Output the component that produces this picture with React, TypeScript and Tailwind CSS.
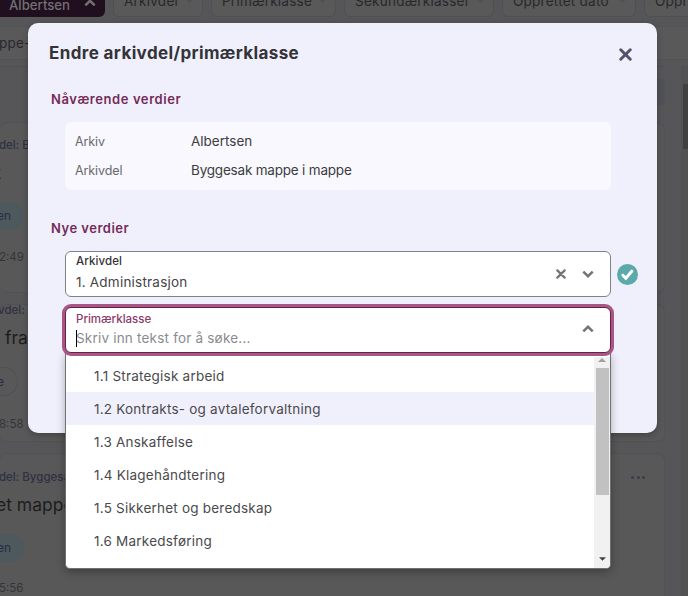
import React from "react";

const options = [
  "1.1 Strategisk arbeid",
  "1.2 Kontrakts- og avtaleforvaltning",
  "1.3 Anskaffelse",
  "1.4 Klagehåndtering",
  "1.5 Sikkerhet og beredskap",
  "1.6 Markedsføring",
];

function Chevron({ up = false, className = "" }: { up?: boolean; className?: string }) {
  return (
    <svg viewBox="0 0 12 8" fill="none" stroke="currentColor" className={className}>
      <path d={up ? "M1.3 6.3 6 1.8l4.700 4.500" : "M1.300 1.700 6 6.200l4.700-4.500"} strokeWidth="2.500" />
    </svg>
  );
}

function Cross({ className = "" }: { className?: string }) {
  return (
    <svg viewBox="0 0 12 12" fill="none" stroke="currentColor" strokeWidth="2.700" strokeLinecap="round" className={className}>
      <path d="M1.600 1.600l8.800 8.800M10.400 1.600l-8.800 8.800" />
    </svg>
  );
}

function FilterPill({ label, className }: { label: string; className: string }) {
  return (
    <div className={`flex h-[34px] shrink-0 items-center justify-between rounded-md border border-[#505053] bg-[#595959] pr-2 pl-[10px] text-[13.5px] tracking-[0.25px] text-[#28282b] ${className}`}>
      <span className="mt-[2px] whitespace-nowrap">{label}</span>
      <Chevron className="h-[6px] w-[9px] text-[#515153]" />
    </div>
  );
}

function Background() {
  return (
    <div className="flex h-full flex-col overflow-hidden bg-[#565658]">
      <div className="-mt-[17px] flex h-[43px] shrink-0 gap-2 overflow-hidden">
        <div className="flex h-[34px] w-[105px] shrink-0 items-center justify-between rounded-br-md bg-[#200f1e] pr-[9px] pl-[9px] text-[13.2px] font-medium text-[#737073]">
          <span className="mt-[12px]">Albertsen</span>
          <Chevron up className="mt-[5px] h-[8px] w-[12px] text-[#737073]" />
        </div>
        <FilterPill label="Arkivdel" className="w-[90px]" />
        <FilterPill label="Primærklasse" className="w-[125px]" />
        <FilterPill label="Sekundærklasser" className="w-[150px]" />
        <FilterPill label="Opprettet dato" className="w-[134px]" />
        <FilterPill label="Opprettet av" className="w-[134px]" />
      </div>
      <div className="flex h-[34px] shrink-0 items-center border-y border-[#535356] bg-[#595959] text-[13.5px] tracking-[0.2px] text-[#28282b]">
        <span className="-ml-px">ppe-</span>
      </div>
      <div className="flex min-h-0 flex-1 pt-[6px]">
        <div className="flex w-[665px] flex-col border-t border-[#505054]">
          <div className="flex h-[55px] shrink-0 items-start justify-end pt-[12px]">
            <div className="h-[26px] w-[30px] rounded-r bg-[#515158]" />
          </div>
          <div className="flex h-[171px] shrink-0 flex-col rounded-lg border border-l-0 border-[#525255] bg-[#585858] pt-[12px]">
            <div className="-ml-px h-[20px] text-[11.5px] leading-[20px] font-medium text-[#303043]">del: Byggesak</div>
            <div className="mt-[6px] -ml-[5px] h-[24px] text-[18px] leading-[24px] text-[#1d1d1f]">t</div>
            <div className="mt-[17px] h-[28px] w-[24px] rounded-r-full bg-[#4d595d] text-[12px] leading-[28px] text-[#292c45]"><span className="-ml-[3px]">en</span></div>
            <div className="mt-[17px] -ml-px h-[20px] text-[11.5px] leading-[20px] text-[#343438]">2:49</div>
          </div>
          <div className="mt-[11px] flex h-[138px] shrink-0 flex-col rounded-lg border border-l-0 border-[#525255] bg-[#585858]">
            <div className="mt-[-5px] -ml-[2px] h-[20px] text-[11.5px] leading-[20px] font-medium text-[#303043]">vdel: Byggesak</div>
            <div className="mt-[6px] h-[24px] pl-[5px] text-[17.5px] leading-[24px] text-[#1d1d1f]">fra</div>
            <div className="mt-[17px] h-[29px] w-[18px] rounded-r-full border border-l-0 border-[#505056] text-[12px] leading-[27px] text-[#292c45]"><span className="-ml-[3px]">e</span></div>
            <div className="mt-[18px] -ml-px h-[20px] text-[11.5px] leading-[20px] text-[#343438]">8:58</div>
          </div>
          <div className="mt-[11px] flex h-[180px] shrink-0 flex-col rounded-lg border border-l-0 border-[#525255] bg-[#585858] pt-[13px]">
            <div className="flex h-[20px] items-center justify-between pr-[19px] text-[11.5px] leading-[20px] font-medium text-[#303043]">
              <span className="-ml-px">del: Byggesak</span>
              <span className="flex gap-[2.5px]">
                <i className="size-[3px] rounded-full bg-[#3c3c4c]" />
                <i className="size-[3px] rounded-full bg-[#3c3c4c]" />
                <i className="size-[3px] rounded-full bg-[#3c3c4c]" />
              </span>
            </div>
            <div className="mt-[6px] -ml-[4px] h-[24px] text-[17.5px] leading-[24px] text-[#1d1d1f]">et mappe</div>
            <div className="mt-[17px] h-[28px] w-[24px] rounded-r-full bg-[#4d595d] text-[12px] leading-[28px] text-[#292c45]"><span className="-ml-[3px]">en</span></div>
            <div className="mt-[16px] -ml-px h-[20px] text-[11.5px] leading-[20px] text-[#343438]">5:56</div>
          </div>
        </div>
        <div className="ml-[16px] w-[7px] bg-[#525252] pt-[18px] pl-[2px]">
          <div className="h-[65px] w-full bg-[#404040]" />
        </div>
      </div>
    </div>
  );
}

function Dropdown() {
  return (
    <div className="absolute top-full left-0 flex h-[216px] w-[546px] overflow-hidden rounded-b-[5px] border border-t-0 border-[#707070] bg-white pt-[4px] shadow-[0_3px_8px_rgba(0,0,0,0.3)]">
      <div className="flex-1 pt-[2px]">
        {options.map((option, i) => (
          <div
            key={option}
            className={`h-[33px] pl-[28px] text-[13.5px] leading-[34px] tracking-[0.22px] text-[#4a4a4d] ${i === 1 ? "bg-[#f0f0fc]" : ""}`}
          >
            {option}
          </div>
        ))}
      </div>
      <div className="flex w-[16px] flex-col items-center justify-between bg-[#f1f1f1]">
        <div className="flex flex-col items-center">
          <svg viewBox="0 0 8 4" className="mt-[1px] mb-[6px] h-[4px] w-[8px]">
            <path d="M0 4 4 0l4 4z" fill="#a0a0a0" />
          </svg>
          <div className="h-[127px] w-[13px] bg-[#c1c1c1]" />
        </div>
        <svg viewBox="0 0 8 4" className="mb-[7px] h-[4px] w-[7px]">
          <path d="M0 0h8L4 4z" fill="#424242" />
        </svg>
      </div>
    </div>
  );
}

export default function App() {
  return (
    <div className="relative h-[596px] w-[688px] overflow-hidden font-['Inter',sans-serif]">
      <Background />
      <div className="absolute top-[23px] left-[28px] flex h-[410px] w-[629px] flex-col rounded-[10px] bg-[#f0f0fc] shadow-[0_2px_6px_rgba(0,0,0,0.25)]">
        <header className="flex h-[60px] items-center justify-between pr-[25px] pl-[21px]">
          <h1 className="mt-[2px] text-[17px] font-bold tracking-[0.38px] text-[#333338]">Endre arkivdel/primærklasse</h1>
          <Cross className="mt-[2px] size-[13px] text-[#52526d]" />
        </header>
        <h2 className="mt-[6px] ml-[23px] h-[20px] text-[13px] leading-[20px] font-semibold tracking-[0.58px] text-[#742b58]">Nåværende verdier</h2>
        <dl className="mt-[13px] ml-[37px] grid h-[68px] w-[546px] grid-cols-[116px_1fr] content-center rounded-md bg-[#f8f8fe] pl-[10px] leading-[29px]">
          <dt className="text-[12.5px] tracking-[-0.1px] text-[#69696d]">Arkiv</dt>
          <dd className="text-[13.5px] text-[#3c3c40]">Albertsen</dd>
          <dt className="text-[12.5px] tracking-[-0.1px] text-[#69696d]">Arkivdel</dt>
          <dd className="text-[13.5px] tracking-[-0.2px] text-[#3c3c40]">Byggesak mappe i mappe</dd>
        </dl>
        <h2 className="mt-[28px] ml-[23px] h-[20px] text-[13px] leading-[20px] font-semibold tracking-[0.5px] text-[#742b58]">Nye verdier</h2>
        <div className="mt-[13px] ml-[37px] flex items-center gap-[6px]">
          <div className="flex h-[46px] w-[546px] items-center justify-between rounded-[6px] border border-[#808086] bg-white pr-[16px] pl-[10px]">
            <div className="pb-[3px]">
              <div className="h-[19px] text-[11.5px] leading-[19px] font-medium tracking-[0.1px] text-[#333338]">Arkivdel</div>
              <div className="h-[22px] text-[13.5px] leading-[22px] tracking-[0.22px] text-[#444447]">1. Administrasjon</div>
            </div>
            <div className="mb-px flex items-center gap-[16px] text-[#747474]">
              <Cross className="size-[10px]" />
              <Chevron className="h-[8px] w-[12px]" />
            </div>
          </div>
          <svg viewBox="0 0 21 21" className="size-[21px]">
            <circle cx="10.500" cy="10.500" r="10.500" fill="#5aa9ab" />
            <path d="M5.800 11.200l3 3 6-7" fill="none" stroke="white" strokeWidth="3" strokeLinecap="round" />
          </svg>
        </div>
        <div className="relative mt-[10px] ml-[37px] w-[546px]">
          <Dropdown />
          <div className="relative flex h-[46px] items-center justify-between rounded-[6px] border border-[#65204b] bg-white pr-[16px] pl-[10px] shadow-[0_0_0_3px_#aa5685]">
            <div className="pb-[3px]">
              <div className="h-[19px] text-[11.5px] leading-[20px] font-medium text-[#8a3a6a]">Primærklasse</div>
              <div className="flex h-[21px] items-center text-[13.5px] leading-[21px] tracking-[0.2px] text-[#8b8b8e]">
                <span className="h-[17px] w-px bg-black" />
                <span className="-ml-px">Skriv inn tekst for å søke...</span>
              </div>
            </div>
            <Chevron up className="mb-[3px] h-[8px] w-[12px] text-[#747474]" />
          </div>
        </div>
      </div>
    </div>
  );
}
